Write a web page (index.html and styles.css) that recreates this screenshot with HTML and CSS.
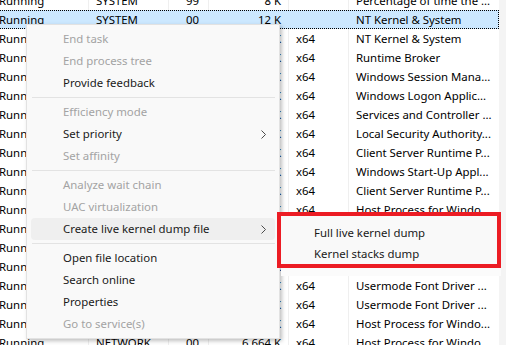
FILE: index.html
```html
<!DOCTYPE html>
<html lang="en">
<head>
<meta charset="UTF-8">
<title>Task Manager - Details</title>
<link rel="stylesheet" href="styles.css">
</head>
<body>

<div class="details">
    <div class="grid" id="grid">
        <div class="row"><span>Running</span><span>SYSTEM</span><span class="num">99</span><span class="num">8 K</span><span></span><span>Percentage of time the ...</span></div>
        <div class="row selected"><span>Running</span><span>SYSTEM</span><span class="num">00</span><span class="num">12 K</span><span></span><span>NT Kernel &amp; System</span></div>
        <div class="row"><span>Running</span><span>SYSTEM</span><span class="num">00</span><span class="num">136 K</span><span>x64</span><span>NT Kernel &amp; System</span></div>
        <div class="row"><span>Running</span><span>User</span><span class="num">00</span><span class="num">2 420 K</span><span>x64</span><span>Runtime Broker</span></div>
        <div class="row"><span>Running</span><span>SYSTEM</span><span class="num">00</span><span class="num">240 K</span><span>x64</span><span>Windows Session Mana...</span></div>
        <div class="row"><span>Running</span><span>SYSTEM</span><span class="num">00</span><span class="num">1 012 K</span><span>x64</span><span>Windows Logon Applic...</span></div>
        <div class="row"><span>Running</span><span>SYSTEM</span><span class="num">00</span><span class="num">3 116 K</span><span>x64</span><span>Services and Controller ...</span></div>
        <div class="row"><span>Running</span><span>SYSTEM</span><span class="num">00</span><span class="num">5 880 K</span><span>x64</span><span>Local Security Authority...</span></div>
        <div class="row"><span>Running</span><span>SYSTEM</span><span class="num">00</span><span class="num">1 204 K</span><span>x64</span><span>Client Server Runtime P...</span></div>
        <div class="row"><span>Running</span><span>SYSTEM</span><span class="num">00</span><span class="num">780 K</span><span>x64</span><span>Windows Start-Up Appl...</span></div>
        <div class="row"><span>Running</span><span>SYSTEM</span><span class="num">00</span><span class="num">1 660 K</span><span>x64</span><span>Client Server Runtime P...</span></div>
        <div class="row"><span>Running</span><span>SYSTEM</span><span class="num">00</span><span class="num">9 316 K</span><span>x64</span><span>Host Process for Windo...</span></div>
        <div class="row"><span>Running</span><span>NETWORK</span><span class="num">00</span><span class="num">4 820 K</span><span>x64</span><span>Host Process for Windo...</span></div>
        <div class="row"><span>Running</span><span>SYSTEM</span><span class="num">00</span><span class="num">1 428 K</span><span>x64</span><span>Host Process for Windo...</span></div>
        <div class="row"><span>Running</span><span>SYSTEM</span><span class="num">00</span><span class="num">2 004 K</span><span>x64</span><span>Host Process for Windo...</span></div>
        <div class="row"><span>Running</span><span>UMFD-0</span><span class="num">00</span><span class="num">1 136 K</span><span>x64</span><span>Usermode Font Driver ...</span></div>
        <div class="row"><span>Running</span><span>UMFD-1</span><span class="num">00</span><span class="num">2 288 K</span><span>x64</span><span>Usermode Font Driver ...</span></div>
        <div class="row"><span>Running</span><span>SYSTEM</span><span class="num">00</span><span class="num">1 552 K</span><span>x64</span><span>Host Process for Windo...</span></div>
        <div class="row"><span>Running</span><span>NETWORK</span><span class="num">00</span><span class="num">6 664 K</span><span>x64</span><span>Host Process for Windo...</span></div>
    </div>
    <div class="scroll-track"></div>
</div>

<div class="menu">
    <div class="item disabled">End task</div>
    <div class="item disabled">End process tree</div>
    <div class="item">Provide feedback</div>
    <div class="sep"></div>
    <div class="item disabled">Efficiency mode</div>
    <div class="item">Set priority
        <svg class="chev" width="5" height="9" viewBox="0 0 5 9"><path d="M0.5 0.5 L4.5 4.5 L0.5 8.5" fill="none" stroke="#4a4a4a" stroke-width="1"/></svg>
    </div>
    <div class="item disabled">Set affinity</div>
    <div class="sep"></div>
    <div class="item disabled">Analyze wait chain</div>
    <div class="item disabled">UAC virtualization</div>
    <div class="item hover">Create live kernel dump file
        <svg class="chev" width="5" height="9" viewBox="0 0 5 9"><path d="M0.5 0.5 L4.5 4.5 L0.5 8.5" fill="none" stroke="#4a4a4a" stroke-width="1"/></svg>
    </div>
    <div class="sep"></div>
    <div class="item">Open file location</div>
    <div class="item">Search online</div>
    <div class="item">Properties</div>
    <div class="item disabled">Go to service(s)</div>
</div>

<div class="submenu">
    <div class="highlight">
        <div class="sub-item">Full live kernel dump</div>
        <div class="sub-item">Kernel stacks dump</div>
    </div>
</div>

</body>
</html>
```

FILE: styles.css
```css
body {
    margin: 0;
    font-family: 'Noto Sans', 'Open Sans', sans-serif;
    font-size: 11.4px;
    color: #000;
    background: #fff;
    overflow: hidden;
}
.details {
    display: flex;
    height: 345px;
    overflow: hidden;
}
.grid {
    flex: 0 0 506px;
    margin: -9.5px 0 0 -7px;
}
.row {
    display: grid;
    grid-template-columns: 96px 80px 40px 80px 60px 149px;
    height: 19px;
    line-height: 19px;
    box-sizing: border-box;
}
.row span {
    border-right: 1px solid #efefef;
    padding: 0 7px;
    white-space: nowrap;
    overflow: hidden;
}
.row span:first-child {
    padding-left: 6px;
}
.row span:last-child {
    border-right: none;
}
.row span.num {
    text-align: right;
    padding-right: 9px;
}
.row span.num + span.num {
    padding-right: 7px;
}
.row.selected {
    background: #cce8ff;
    outline: 1px dotted #000;
    outline-offset: -1px;
}
.row.selected span {
    border-right-color: transparent;
}
.scroll-track {
    flex: 1;
    background: #f4f4f4;
}

/* context menu */
.menu {
    position: absolute;
    left: 26px;
    top: 24px;
    width: 254px;
    height: 315px;
    padding: 3px 0 0;
    box-sizing: border-box;
    background: #f9f9f9;
    border: 1px solid #e2e2e2;
    box-shadow: 2px 2px 4px rgba(0, 0, 0, 0.25);
    color: #1a1a1a;
}
.item {
    position: relative;
    height: 22px;
    line-height: 22px;
    margin: 0 4px;
    padding-left: 32px;
    border-radius: 4px;
    white-space: nowrap;
}
.item.disabled {
    color: #a3a3a3;
}
.item.hover {
    background: #efefef;
}
.chev {
    position: absolute;
    right: 9px;
    top: 7px;
}
.sep {
    height: 1px;
    margin: 3px 4px 3px 5px;
    background: #e3e3e3;
}

/* submenu + red annotation */
.submenu {
    position: absolute;
    left: 281px;
    top: 212px;
    width: 220px;
    height: 64px;
    background: #fbfbfb;
}
.highlight {
    margin-left: -4px;
    height: 56px;
    border: 4px solid #ec1c24;
    box-sizing: border-box;
    padding-top: 6px;
    background: #f9f9f9;
}
.sub-item {
    height: 21px;
    line-height: 21px;
    padding-left: 33px;
    color: #1a1a1a;
    white-space: nowrap;
}
```
